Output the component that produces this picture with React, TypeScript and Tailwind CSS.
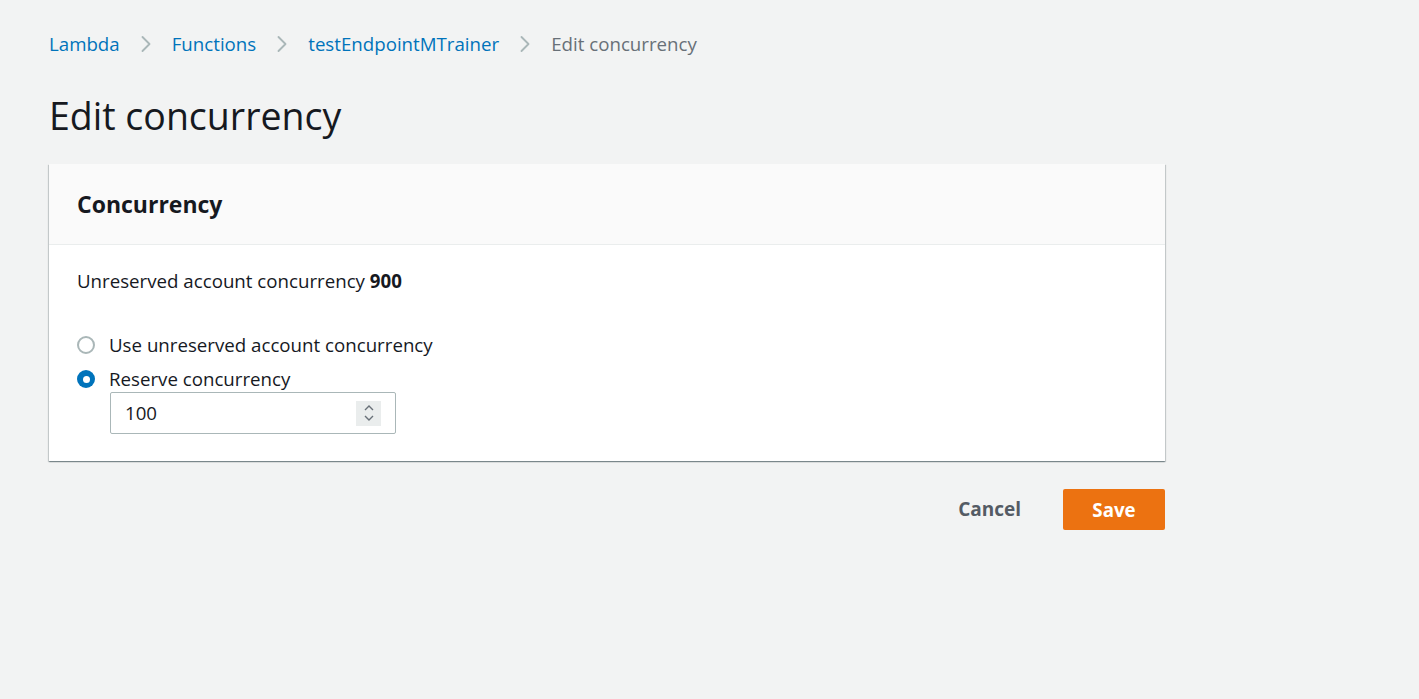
import { ChevronRight } from "lucide-react";

const crumbs = ["Lambda", "Functions", "testEndpointMTrainer"];

function Radio({ checked, label }: { checked: boolean; label: string }) {
  return (
    <label className="flex items-center gap-[14px] h-[28px]">
      {checked ? (
        <span className="w-[18px] h-[18px] rounded-full bg-[#0073bb] flex items-center justify-center">
          <span className="w-[7px] h-[7px] rounded-full bg-white" />
        </span>
      ) : (
        <span className="w-[18px] h-[18px] rounded-full border-2 border-[#aab7b8] bg-white" />
      )}
      <span className="text-[18.7px] text-[#16191f]">{label}</span>
    </label>
  );
}

export default function App() {
  return (
    <div className="min-h-[699px] bg-[#f2f3f3] font-['Open_Sans',sans-serif] text-[#16191f]">
      <div className="w-[1116px] ml-[49px] pt-[30px]">
        <nav className="flex items-center h-[28px] text-[18.7px]">
          {crumbs.map((c) => (
            <span key={c} className="flex items-center">
              <a className="text-[#0073bb]">{c}</a>
              <ChevronRight className="mx-[12px] text-[#aab7b8]" size={28} strokeWidth={1.6} />
            </span>
          ))}
          <span className="text-[#687078]">Edit concurrency</span>
        </nav>

        <h1 className="mt-[36px] text-[37.5px] leading-[44px]">Edit concurrency</h1>

        <section className="mt-[26px] bg-white shadow-[0_1px_1px_0_rgba(0,28,36,0.3),1px_1px_1px_0_rgba(0,28,36,0.15),-1px_1px_1px_0_rgba(0,28,36,0.15)]">
          <div className="h-[81px] bg-[#fafafa] border-b border-[#eaeded] px-[28px] flex items-center">
            <h2 className="text-[23px] font-bold">Concurrency</h2>
          </div>
          <div className="px-[28px] pt-[22px] pb-[27px]">
            <p className="text-[18.7px]">
              Unreserved account concurrency <b>900</b>
            </p>
            <div className="mt-[36px] flex flex-col gap-[6px]">
              <Radio checked={false} label="Use unreserved account concurrency" />
              <Radio checked label="Reserve concurrency" />
            </div>
            <div className="ml-[33px] -mt-[1px] w-[286px] h-[42px] border border-[#aab7b8] rounded-[2px] flex items-center justify-between pl-[14px] pr-[14px]">
              <span className="text-[18.7px]">100</span>
              <span className="w-[25px] h-[25px] bg-[#eaeded] flex flex-col items-center justify-center text-[#687078]">
                <svg width="12" height="20" viewBox="0 0 12 20" fill="none" stroke="currentColor" strokeWidth="1.4">
                  <path d="M2 7 L6 3 L10 7" />
                  <path d="M2 13 L6 17 L10 13" />
                </svg>
              </span>
            </div>
          </div>
        </section>

        <div className="mt-[28px] flex justify-end items-center gap-[28px]">
          <button className="px-[14px] h-[41px] text-[19px] font-bold text-[#545b64]">Cancel</button>
          <button className="w-[102px] h-[41px] rounded-[2px] bg-[#ec7211] text-white text-[18.7px] font-bold">Save</button>
        </div>
      </div>
    </div>
  );
}
